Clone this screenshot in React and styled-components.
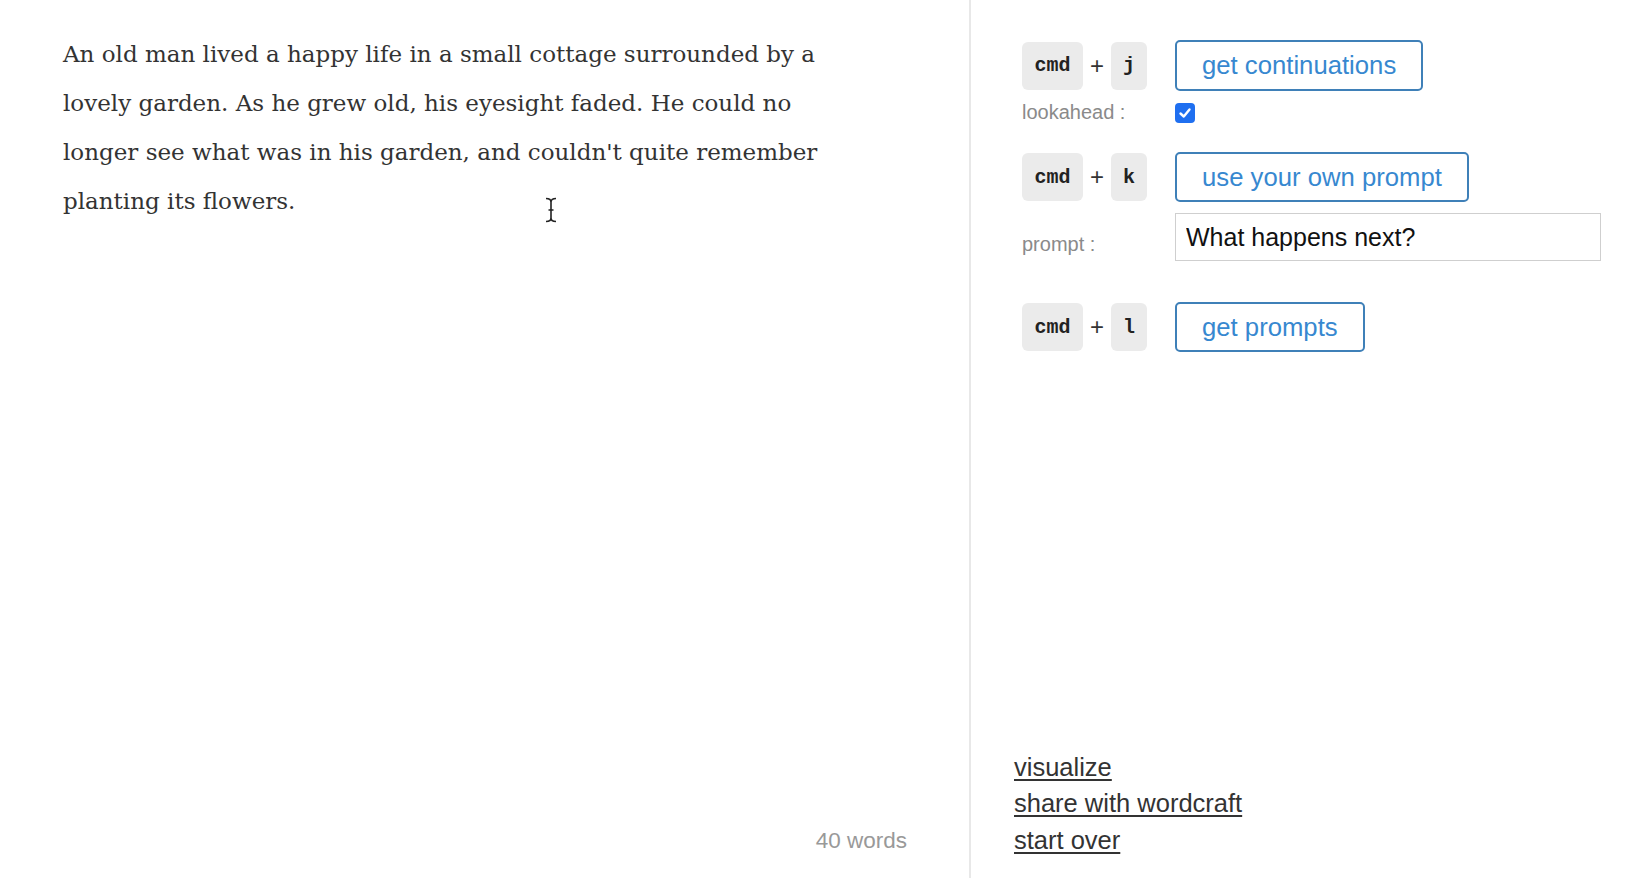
import React from "react";
import styled, { createGlobalStyle } from "styled-components";

const Global = createGlobalStyle`
  html, body { margin: 0; padding: 0; background: #fff; }
  body { font-family: "Liberation Sans", Arial, sans-serif; }
  #root { height: 100vh; }
`;

const Page = styled.div`
  display: flex;
  height: 878px;
  width: 1630px;
  overflow: hidden;
`;

const Editor = styled.div`
  position: relative;
  width: 971px;
  box-sizing: border-box;
  border-right: 2px solid #e8e8e8;
  padding: 30px 62px 19px 63px;
  display: flex;
  flex-direction: column;
`;

const Story = styled.p`
  margin: 0;
  max-width: 790px;
  font-family: "DejaVu Serif", "Liberation Serif", serif;
  font-size: 23px;
  line-height: 49px;
  color: #333;
  flex: 1;
`;

const WordCount = styled.div`
  align-self: flex-end;
  font-size: 22.5px;
  line-height: 36px;
  color: #999;
`;

const Cursor = styled.svg`
  position: absolute;
  left: 544px;
  top: 197px;
`;

const Sidebar = styled.div`
  flex: 1;
  display: flex;
  flex-direction: column;
  justify-content: space-between;
  padding: 40px 29px 20px 51px;
`;

const Controls = styled.div`
  display: grid;
  grid-template-columns: 153px 1fr;
  align-items: center;
`;

const Shortcut = styled.div`
  display: flex;
  align-items: center;
  gap: 7px;
`;

const Key = styled.span`
  display: inline-flex;
  align-items: center;
  justify-content: center;
  height: 48px;
  padding: 0 12px;
  box-sizing: border-box;
  min-width: ${(p) => (p.$wide ? "61px" : "34px")};
  background: #ebebeb;
  border-radius: 6px;
  font-family: "Liberation Mono", "Courier New", monospace;
  font-weight: bold;
  font-size: 20px;
  color: #222;
`;

const Plus = styled.span`
  font-size: 24px;
  color: #333;
  width: 14px;
  text-align: center;
`;

const ActionCell = styled.div`
  display: flex;
  margin-top: ${(p) => p.$mt || 0}px;
`;

const Action = styled.button`
  height: ${(p) => p.$h || 51}px;
  padding: 0 25px;
  background: #fff;
  border: 2px solid #3f80b8;
  border-radius: 5px;
  font-family: "Liberation Sans", Arial, sans-serif;
  font-size: 25.7px;
  color: #3788d0;
  cursor: pointer;
`;

const Label = styled.div`
  font-size: 20px;
  color: #8a8a8a;
  margin-top: ${(p) => p.$mt || 0}px;
  padding-top: ${(p) => p.$pt || 0}px;
`;

const Check = styled.span`
  display: inline-flex;
  align-items: center;
  justify-content: center;
  width: 20px;
  height: 20px;
  border-radius: 4px;
  background: #1f6ff0;
`;

const PromptInput = styled.input`
  width: 100%;
  height: 48px;
  box-sizing: border-box;
  border: 1px solid #cfcfcf;
  padding: 0 10px;
  font-family: "Liberation Sans", Arial, sans-serif;
  font-size: 25px;
  color: #111;
  outline: none;
`;

const Links = styled.div`
  display: flex;
  flex-direction: column;
  margin-left: -8px;
`;

const Link = styled.a`
  font-size: 25.5px;
  line-height: 36.5px;
  color: #333;
  text-decoration: underline;
  text-underline-offset: 3px;
  cursor: pointer;
  align-self: flex-start;
`;

function Keys({ letter }) {
  return (
    <Shortcut>
      <Key $wide>cmd</Key>
      <Plus>+</Plus>
      <Key>{letter}</Key>
    </Shortcut>
  );
}

export default function App() {
  return (
    <>
      <Global />
      <Page>
        <Editor>
          <Story>
            An old man lived a happy life in a small cottage surrounded by a lovely garden. As he
            grew old, his eyesight faded. He could no longer see what was in his garden, and
            couldn't quite remember planting its flowers.
          </Story>
          <WordCount>40 words</WordCount>
          <Cursor width="14" height="26" viewBox="0 0 14 26">
            <path
              d="M2 1.5 Q7 1.5 7 5 Q7 1.5 12 1.5 M7 5 V21 M2 24.5 Q7 24.5 7 21 Q7 24.5 12 24.5 M4.5 13 H9.5"
              fill="none"
              stroke="#222"
              strokeWidth="1.6"
            />
          </Cursor>
        </Editor>
        <Sidebar>
          <Controls>
            <Keys letter="j" />
            <ActionCell>
              <Action>get continuations</Action>
            </ActionCell>

            <Label $mt={10}>lookahead :</Label>
            <ActionCell $mt={10}>
              <Check>
                <svg width="14" height="14" viewBox="0 0 14 14">
                  <path d="M2.5 7.5 L5.8 10.5 L11.5 3.5" fill="none" stroke="#fff" strokeWidth="2.4" strokeLinecap="round" strokeLinejoin="round" />
                </svg>
              </Check>
            </ActionCell>

            <ActionCell $mt={28} as="div">
              <Keys letter="k" />
            </ActionCell>
            <ActionCell $mt={28}>
              <Action $h={50}>use your own prompt</Action>
            </ActionCell>

            <Label $mt={11} $pt={15}>prompt :</Label>
            <ActionCell $mt={11}>
              <PromptInput defaultValue="What happens next?" />
            </ActionCell>

            <ActionCell $mt={41} as="div">
              <Keys letter="l" />
            </ActionCell>
            <ActionCell $mt={41}>
              <Action $h={50}>get prompts</Action>
            </ActionCell>
          </Controls>
          <Links>
            <Link>visualize</Link>
            <Link>share with wordcraft</Link>
            <Link>start over</Link>
          </Links>
        </Sidebar>
      </Page>
    </>
  );
}
